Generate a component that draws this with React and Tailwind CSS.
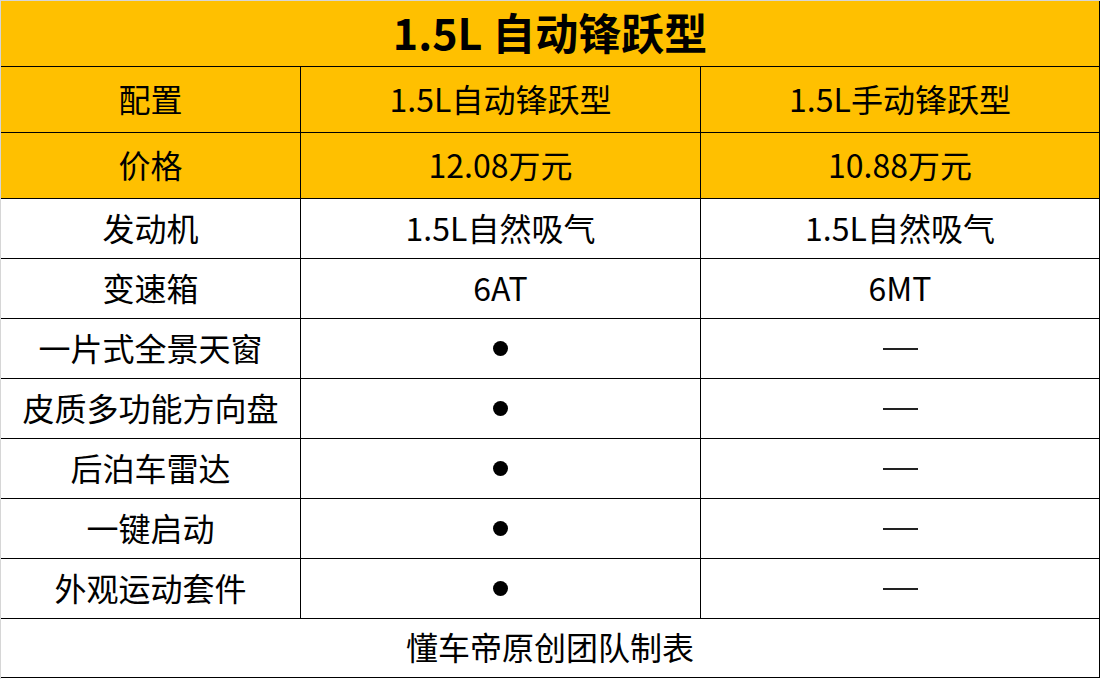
import React from "react";

const rows = [
  { label: "配置", a: "1.5L自动锋跃型", b: "1.5L手动锋跃型", head: true },
  { label: "价格", a: "12.08万元", b: "10.88万元", head: true },
  { label: "发动机", a: "1.5L自然吸气", b: "1.5L自然吸气" },
  { label: "变速箱", a: "6AT", b: "6MT" },
  { label: "一片式全景天窗", a: "dot", b: "dash" },
  { label: "皮质多功能方向盘", a: "dot", b: "dash" },
  { label: "后泊车雷达", a: "dot", b: "dash" },
  { label: "一键启动", a: "dot", b: "dash" },
  { label: "外观运动套件", a: "dot", b: "dash" },
];

const Cell = ({ value }) => {
  if (value === "dot") {
    return <span className="block w-[15px] h-[15px] rounded-full bg-black" />;
  }
  if (value === "dash") {
    return <span className="block w-[35px] h-[2px] bg-[#222]" />;
  }
  return <span className="pb-[4px]">{value}</span>;
};

export default function App() {
  return (
    <div
      className="w-[1100px] h-[679px] flex flex-col border-t border-l border-[#d6d6d6] bg-white text-black text-[32px] leading-none"
      style={{ fontFamily: '"Noto Sans CJK SC", "Noto Sans", sans-serif' }}
    >
      {/* title */}
      <div className="h-[66px] shrink-0 flex items-center justify-center bg-[#ffc000] border-b border-r border-black text-[43px] font-bold">
        <span className="pb-[4px]">1.5L 自动锋跃型</span>
      </div>

      {rows.map((r) => (
        <div
          key={r.label}
          className={`${r.head ? "h-[66px] bg-[#ffc000]" : "h-[60px]"} shrink-0 flex border-b border-r border-black`}
        >
          <div className="w-[300px] shrink-0 flex items-center justify-center border-r border-black">
            <span className="pb-[4px]">{r.label}</span>
          </div>
          <div className="w-[400px] shrink-0 flex items-center justify-center border-r border-black">
            <Cell value={r.a} />
          </div>
          <div className="flex-1 flex items-center justify-center">
            <Cell value={r.b} />
          </div>
        </div>
      ))}

      {/* footer */}
      <div className="h-[59px] shrink-0 flex items-center justify-center border-b border-r border-black">
        <span className="pb-[4px]">懂车帝原创团队制表</span>
      </div>
    </div>
  );
}
